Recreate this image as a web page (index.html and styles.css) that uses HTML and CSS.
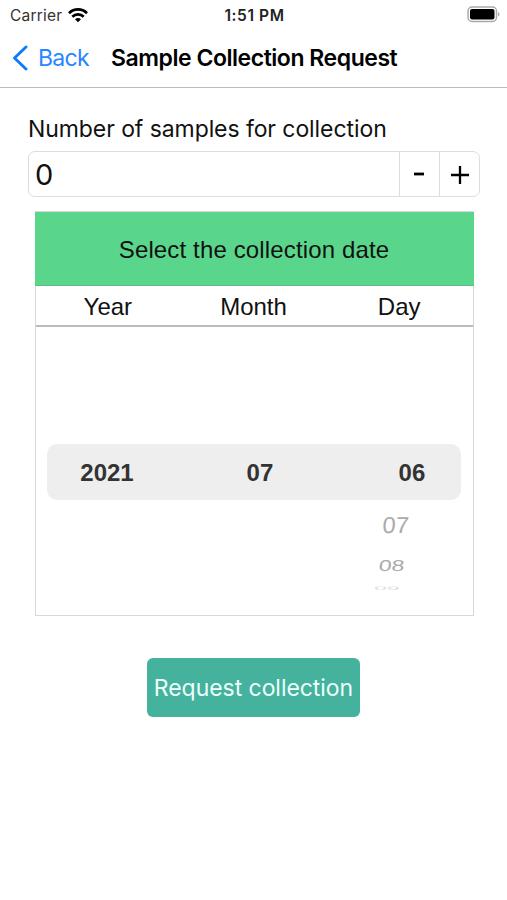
FILE: index.html
```html
<!DOCTYPE html>
<html lang="en">
<head>
<meta charset="utf-8">
<title>Sample Collection Request</title>
<link rel="stylesheet" href="styles.css">
</head>
<body>
<header class="status">
  <div class="carrier"><span>Carrier</span>
    <svg class="wifi" width="20" height="15" viewBox="0 0 20 15" fill="none" stroke="#000" stroke-width="2.7">
      <path d="M1 5.2C6 .2 14 .2 19 5.2M4.3 8.7c3.2-3.1 8.2-3.1 11.4 0"/>
      <path d="M7 11.2c1.8-1.6 4.2-1.6 6 0l-3 3z" fill="#000" stroke="none"/>
    </svg>
  </div>
  <time class="clock">1:51 PM</time>
  <svg class="battery" width="33" height="17" viewBox="0 0 33 17">
    <rect x="1" y="1" width="28.5" height="14.5" rx="4" fill="#fff" stroke="#aaa" stroke-width="1.5"/>
    <rect x="3" y="3" width="24.5" height="10.5" rx="2" fill="#000"/>
    <path d="M31 6v4.5c2-.8 2-3.700 0-4.500z" fill="#aaa"/>
  </svg>
</header>
<nav class="nav">
  <a class="back">
    <svg width="16" height="26" viewBox="0 0 16 26" fill="none" stroke="#0a7bff" stroke-width="2.900" stroke-linecap="round" stroke-linejoin="round"><path d="M14 2 2.500 13 14 24"/></svg>
    <span>Back</span>
  </a>
  <h1>Sample Collection Request</h1>
</nav>
<main>
  <label class="label">Number of samples for collection</label>
  <div class="stepper">
    <output>0</output>
    <button class="minus"><svg width="12" height="4" viewBox="0 0 12 4"><path d="M1 2h10" stroke="#000" stroke-width="2.800"/></svg></button>
    <button class="plus"><svg width="18" height="18" viewBox="0 0 18 18"><path d="M0 9h18M9 0v18" stroke="#000" stroke-width="2.300"/></svg></button>
  </div>
  <section class="picker">
    <h2><span>Select the collection date</span></h2>
    <div class="heads"><span>Year</span><span>Month</span><span>Day</span></div>
    <div class="wheel">
      <div class="selected"><b class="year">2021</b><b class="month">07</b><b class="day">06</b></div>
      <div class="next first"><span>07</span></div>
      <div class="next second"><span>08</span></div>
      <div class="next third"><span>09</span></div>
    </div>
  </section>
  <button class="submit"><span>Request collection</span></button>
</main>
</body>
</html>
```
FILE: styles.css
```css
* { box-sizing: border-box; }
body { margin: 0; height: 900px; overflow: hidden; background: #fff; color: #111; font-family: Inter, sans-serif; }
h1, h2 { margin: 0; font-weight: 400; }
button { margin: 0; padding: 0; border: 0; background: none; font: inherit; }
.status { height: 30px; display: grid; grid-template-columns: 1fr auto 1fr; align-items: center; padding: 0 7px 0 10px; }
.carrier { display: flex; align-items: center; gap: 6px; font-size: 15.500px; letter-spacing: .2px; color: #333; }
.clock { font-size: 15.500px; font-weight: 600; color: #222; letter-spacing: .6px; margin-right: 1px; }
.battery { justify-self: end; margin-top: -2px; }
.nav { height: 58px; display: flex; align-items: center; border-bottom: 1px solid #bbb; padding: 0 0 2px 12px; }
.back { display: flex; align-items: center; gap: 10px; width: 99px; color: #2886ff; font-size: 23px; letter-spacing: -.7px; }
.nav h1 { font-size: 23px; font-weight: 600; color: #000; white-space: nowrap; letter-spacing: -.46px; }
main { padding: 23px 28px 0; }
.label { display: block; height: 40px; line-height: 36px; font-size: 23px; white-space: nowrap; letter-spacing: -.08px; }
.stepper { display: flex; height: 46px; width: 452px; border: 1px solid #ddd; border-radius: 7px; }
.stepper output { flex: 1; padding-left: 6px; font-size: 29px; line-height: 46px; }
.stepper button { width: 40px; display: flex; align-items: center; justify-content: center; border-left: 1px solid #ddd; }
.stepper .minus { padding: 0 2px 1px 0; }
.stepper .plus { padding-top: 1px; }
.picker { width: 439px; height: 405px; margin: 14px 0 0 6.500px; border: 1px solid #d8d8d8; font-family: "Liberation Sans", sans-serif; }
.picker h2 { height: 74px; line-height: 75px; margin: 0 -1px; background: #5ad68c; text-align: center; font-size: 24px; letter-spacing: .14px; border-bottom: 1px solid #66b886; }
.heads { height: 41px; display: grid; grid-template-columns: repeat(3, 1fr); line-height: 42px; text-align: center; font-size: 24px; border-bottom: 2px solid #bbb; }
.heads span { margin-left: -1px; }
.wheel { padding: 117px 12px 0 11px; }
.selected { height: 56px; display: grid; grid-template-columns: 121px 185px 1fr; align-items: center; padding-top: 2px; text-align: center; border-radius: 10px; background: #eee; color: #333; font-size: 24px; }
.month { letter-spacing: .2px; }
.day { letter-spacing: .2px; padding-left: 11px; }
.next { display: flex; justify-content: flex-end; color: #aaa; font-size: 23px; line-height: 24px; }
.next span { display: block; }
.first { margin-top: 13px; padding-right: 52px; }
.first span { transform: skewX(-4deg) scaleX(1.03); }
.second { margin-top: 17px; padding-right: 56px; }
.second span { transform: skewX(-7deg) scaleY(.68); }
.third { margin-top: -2px; padding-right: 61px; color: #ddd; }
.third span { transform: skewX(-10deg) scaleY(.22); }
.submit { display: block; width: 213px; height: 59px; margin: 42px auto 0; border-radius: 6px; background: #44b29c; color: #edfffc; font-size: 23px; white-space: nowrap; letter-spacing: -.05px; padding-top: 1px; }
```
